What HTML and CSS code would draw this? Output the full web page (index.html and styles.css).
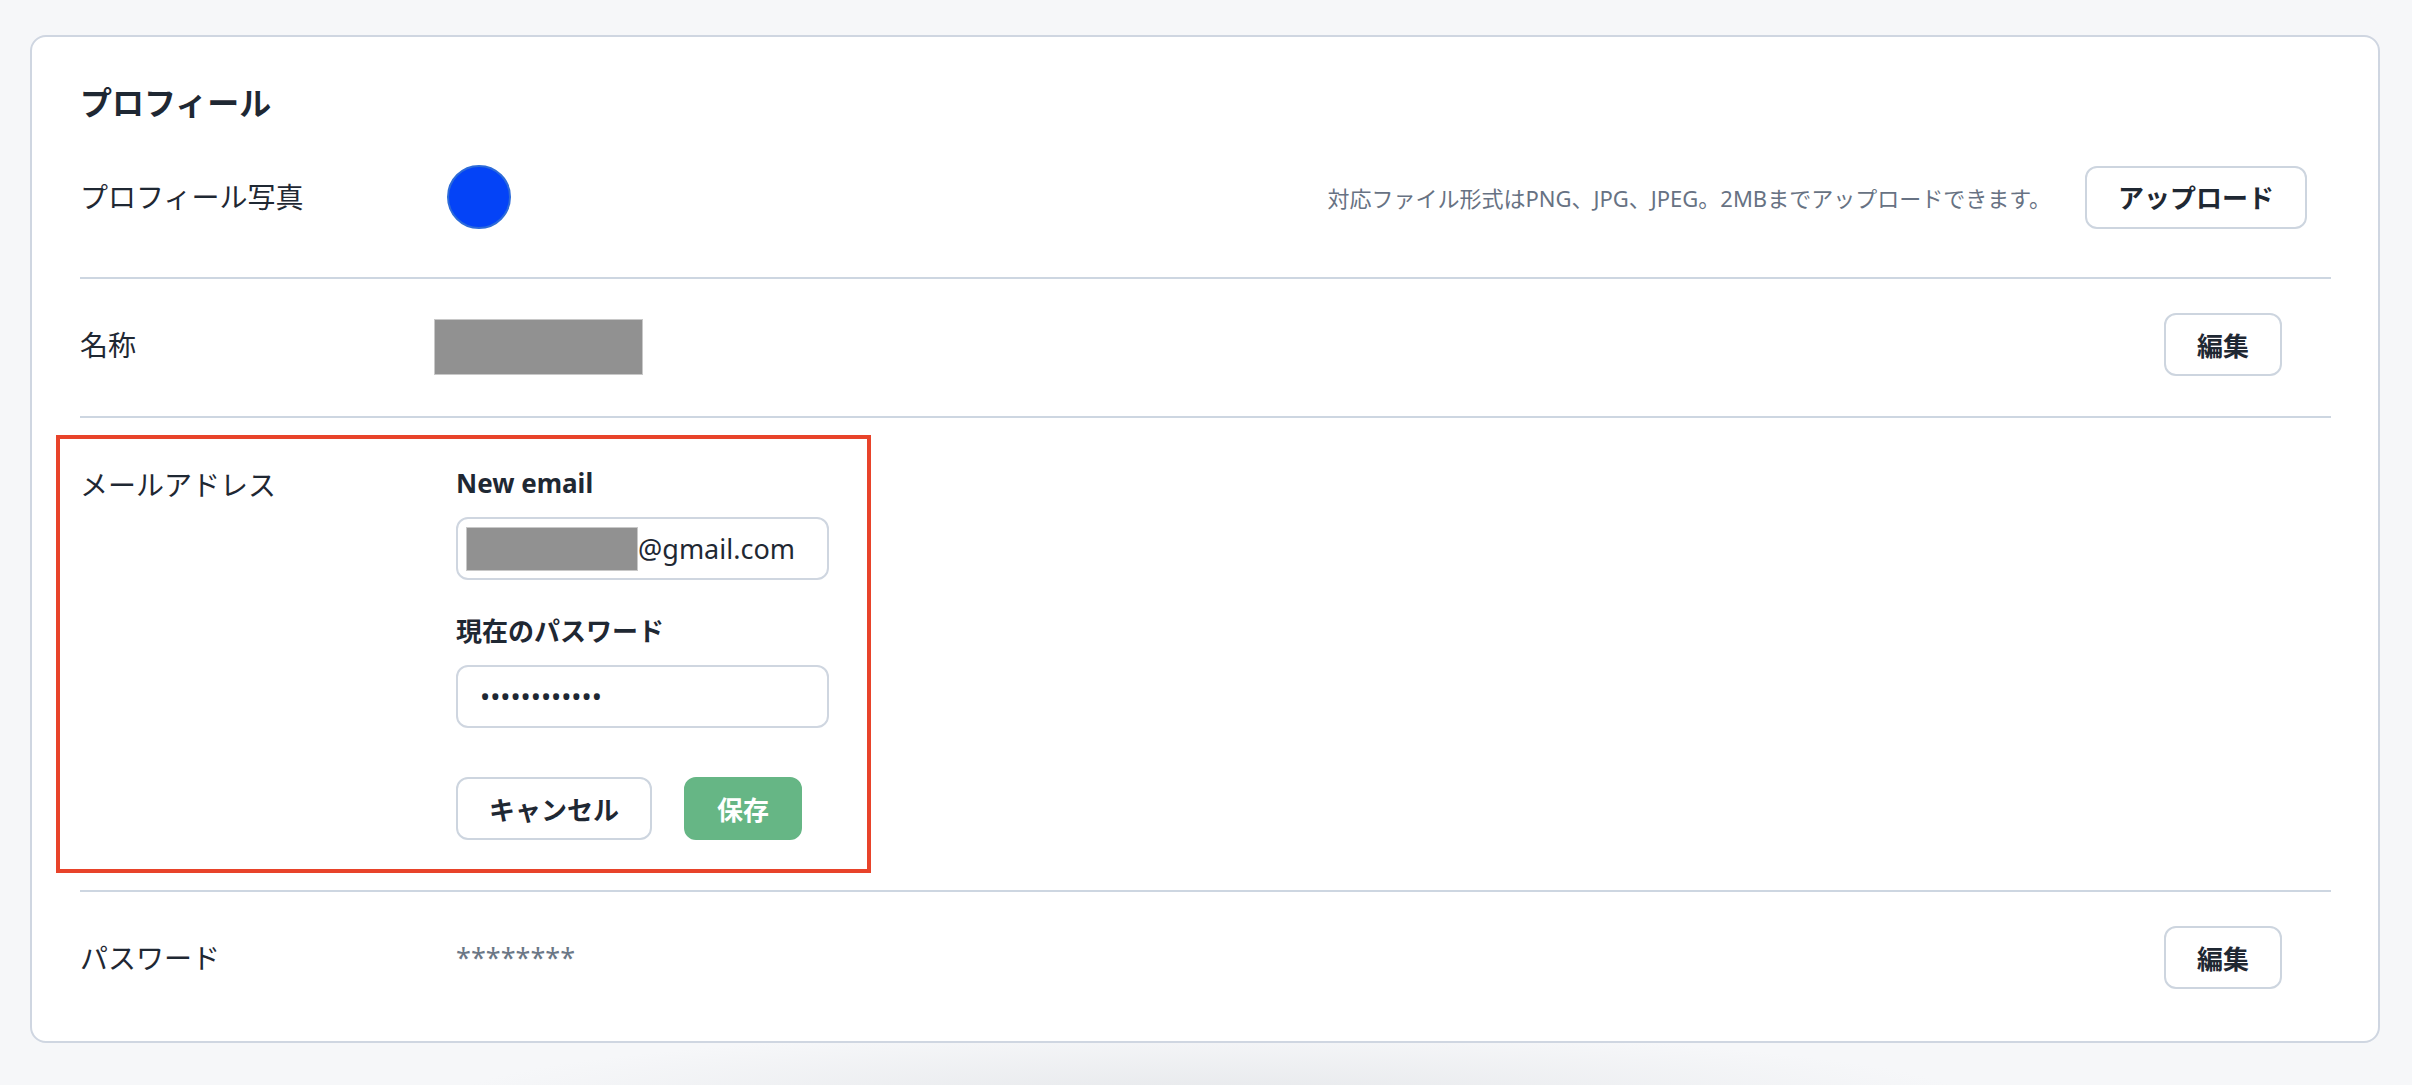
FILE: index.html
```html
<!DOCTYPE html>
<html lang="ja">
<head>
  <meta charset="UTF-8" />
  <title>プロフィール</title>
  <link rel="stylesheet" href="styles.css">
</head>
<body>
  <div class="page">
    <div class="card">
      <h2 class="card-title">プロフィール</h2>

      <div class="row row-photo">
        <div class="row-label">プロフィール写真</div>
        <div class="row-value">
          <div class="avatar"></div>
        </div>
        <div class="row-actions">
          <span class="hint">対応ファイル形式はPNG、JPG、JPEG。2MBまでアップロードできます。</span>
          <button class="btn">アップロード</button>
        </div>
      </div>

      <div class="row">
        <div class="row-label">名称</div>
        <div class="row-value">
          <span class="redact redact-name"></span>
        </div>
        <div class="row-actions">
          <button class="btn">編集</button>
        </div>
      </div>

      <div class="row row-edit">
        <div class="edit-box">
          <div class="row-label">メールアドレス</div>
          <form class="edit-form">
            <label class="field-label">New email</label>
            <div class="field field-email"><span class="redact redact-email"></span>@gmail.com</div>

            <label class="field-label">現在のパスワード</label>
            <input class="field" type="password" value="currentpass1">

            <div class="form-actions">
              <button type="button" class="btn">キャンセル</button>
              <button type="button" class="btn btn-save">保存</button>
            </div>
          </form>
        </div>
      </div>

      <div class="row">
        <div class="row-label">パスワード</div>
        <div class="row-value">
          <span class="masked">********</span>
        </div>
        <div class="row-actions">
          <button class="btn">編集</button>
        </div>
      </div>
    </div>
  </div>
</body>
</html>
```

FILE: styles.css
```css
* {
  margin: 0;
  padding: 0;
  box-sizing: border-box;
}
body {
  font-family: "Noto Sans", "Noto Sans CJK JP", sans-serif;
  color: #1f2833;
  background: radial-gradient(ellipse 760px 70px at 1210px 1100px, #e6e8eb, rgba(246, 247, 249, 0)) no-repeat, #f6f7f9;
  min-height: 1085px;
}
.page {
  padding: 35px 32px 0 30px;
}
.card {
  background: #fff;
  border: 2px solid #cfd6e1;
  border-radius: 16px;
  padding: 43px 47px 12px 48px;
}
.card-title {
  font-size: 32px;
  font-weight: 700;
  line-height: 45px;
}

/* rows */
.row {
  display: grid;
  grid-template-columns: 376px 1fr auto;
  align-items: center;
  border-top: 2px solid #cdd6e1;
  padding: 34px 49px 40px 0;
}
.row-photo {
  border-top: none;
  padding: 40px 24px 48px 0;
}
.row-label {
  font-size: 28px;
  line-height: 40px;
}
.row-value {
  display: flex;
  align-items: center;
}
.row-actions {
  display: flex;
  align-items: center;
  gap: 34px;
}
.hint {
  font-size: 22px;
  color: #677283;
}
.avatar {
  width: 64px;
  height: 64px;
  margin-left: -9px;
  border-radius: 50%;
  background: #0443f7;
  border: 2px solid #2d6bd8;
}
.redact {
  display: inline-block;
  background: #919191;
  border: 1px solid #c8c8c8;
}
.redact-name {
  width: 209px;
  height: 56px;
  margin-left: -22px;
  margin-top: 4px;
}
.masked {
  font-size: 27px;
  line-height: 40px;
  color: #6b7786;
}

/* buttons */
.btn {
  height: 63px;
  padding: 0 31px;
  border: 2px solid #cdd5df;
  border-radius: 12px;
  background: #fff;
  font-family: inherit;
  font-size: 26px;
  font-weight: 700;
  color: #1f2833;
  cursor: pointer;
}
.btn-save {
  background: #66b685;
  border-color: #66b685;
  color: #fff;
}

/* email edit */
.row-edit {
  display: block;
  padding: 17px 0;
}
.edit-box {
  display: grid;
  grid-template-columns: 376px 1fr;
  align-items: start;
  width: 815px;
  margin-left: -24px;
  border: 4px solid #e8432a;
  padding: 26px 0 29px 20px;
}
.edit-form {
  display: flex;
  flex-direction: column;
  align-items: flex-start;
}
.field-label {
  font-size: 26px;
  font-weight: 700;
  line-height: 37px;
  margin-bottom: 15px;
}
.field {
  width: 373px;
  height: 63px;
  border: 2px solid #cfd6e0;
  border-radius: 12px;
  padding: 0 22px;
  margin-bottom: 33px;
  font-family: inherit;
  font-size: 27px;
  color: #1f2833;
  background: #fff;
}
.field-email {
  display: flex;
  align-items: center;
  padding-left: 8px;
}
.redact-email {
  width: 172px;
  height: 44px;
}
.form-actions {
  display: flex;
  gap: 32px;
  margin-top: 16px;
}
```
